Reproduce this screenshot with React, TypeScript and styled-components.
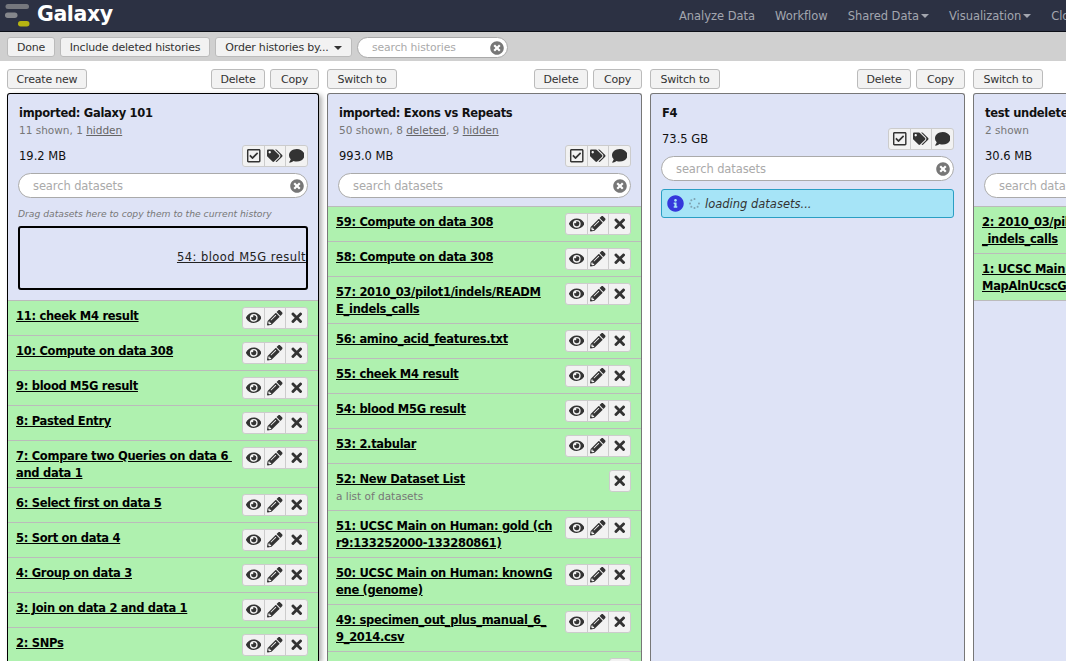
import styled, { createGlobalStyle } from "styled-components";
import { FaEye, FaPencilAlt, FaTimes, FaTimesCircle, FaTags, FaComment, FaRegCheckSquare, FaInfoCircle, FaSpinner } from "react-icons/fa";

type Dataset = { title: string; subtitle?: string; collection?: boolean };

const GALAXY_101: Dataset[] = [
    { title: "11: cheek M4 result" },
    { title: "10: Compute on data 308" },
    { title: "9: blood M5G result" },
    { title: "8: Pasted Entry" },
    { title: "7: Compare two Queries on data 6 \nand data 1" },
    { title: "6: Select first on data 5" },
    { title: "5: Sort on data 4" },
    { title: "4: Group on data 3" },
    { title: "3: Join on data 2 and data 1" },
    { title: "2: SNPs" },
];

const EXONS: Dataset[] = [
    { title: "59: Compute on data 308" },
    { title: "58: Compute on data 308" },
    { title: "57: 2010_03/pilot1/indels/READM\nE_indels_calls" },
    { title: "56: amino_acid_features.txt" },
    { title: "55: cheek M4 result" },
    { title: "54: blood M5G result" },
    { title: "53: 2.tabular" },
    { title: "52: New Dataset List", subtitle: "a list of datasets", collection: true },
    { title: "51: UCSC Main on Human: gold (ch\nr9:133252000-133280861)" },
    { title: "50: UCSC Main on Human: knownG\nene (genome)" },
    { title: "49: specimen_out_plus_manual_6_\n9_2014.csv" },
    { title: "48: New Dataset List", collection: true },
];

const UNDELETED: Dataset[] = [
    { title: "2: 2010_03/pilot1/indels/README\n_indels_calls" },
    { title: "1: UCSC Main on Human: wgEncode\nMapAlnUcscGenes" },
];

const GlobalStyle = createGlobalStyle`
    html, body {
        margin: 0;
        padding: 0;
        background: #fff;
    }
    body {
        font-family: "DejaVu Sans", "Liberation Sans", sans-serif;
        font-size: 11px;
        color: #111;
    }
`;

const Page = styled.div`
    width: 1066px;
    height: 661px;
    overflow: hidden;
    display: flex;
    flex-direction: column;
`;

const Masthead = styled.header`
    height: 31px;
    flex: none;
    display: flex;
    align-items: center;
    background: #2c3143;
    border-bottom: 1px solid #0c0f18;
    padding-left: 5px;
    white-space: nowrap;
    overflow: hidden;

    svg {
        flex: none;
    }
`;

const Brand = styled.span`
    font-size: 20.5px;
    font-weight: bold;
    letter-spacing: -0.4px;
    color: #fff;
    margin-left: 7px;
    width: 642px;
    flex: none;
    margin-top: -4px;
`;

const Nav = styled.nav`
    display: flex;
    flex: none;
    gap: 20px;
`;

const NavItem = styled.a<{ $menu?: boolean }>`
    color: #a3a6af;
    font-size: 11.5px;
    letter-spacing: -0.03px;
    display: flex;
    align-items: center;

    ${(p) => p.$menu && `
        &::after {
            content: "";
            margin-left: 2px;
            border-left: 4px solid transparent;
            border-right: 4px solid transparent;
            border-top: 4px solid #a3a6af;
        }
    `}
`;

const Toolbar = styled.div`
    height: 29px;
    flex: none;
    display: flex;
    align-items: flex-start;
    gap: 5px;
    padding: 5px 7px 0;
    background: #d0d0d0;
    box-sizing: border-box;
`;

const Button = styled.button<{ $w: number }>`
    width: ${(p) => p.$w}px;
    height: 20px;
    padding: 0;
    background: #f2f2f2;
    border: 1px solid #bbb;
    border-radius: 3px;
    font-family: inherit;
    font-size: 11px;
    letter-spacing: -0.2px;
    color: #333;
    white-space: nowrap;
    flex: none;
`;

const Caret = styled.span`
    display: inline-block;
    margin-left: 5px;
    vertical-align: middle;
    border-left: 4px solid transparent;
    border-right: 4px solid transparent;
    border-top: 4px solid #333;
`;

const Search = styled.div<{ $w?: number; $h: number; $small?: boolean }>`
    position: relative;
    width: ${(p) => (p.$w ? `${p.$w}px` : "auto")};
    height: ${(p) => p.$h}px;
    box-sizing: border-box;
    background: #fff;
    border: 1px solid #aaa;
    border-radius: 13px;
    flex: none;

    input {
        width: 100%;
        height: 100%;
        box-sizing: border-box;
        border: 0;
        outline: 0;
        padding: 0 30px 0 14px;
        background: transparent;
        border-radius: 13px;
        font-family: inherit;
        font-size: ${(p) => (p.$small ? 10.8 : 11.5)}px;
        letter-spacing: -0.1px;
    }
    input::placeholder {
        color: #aaa;
        opacity: 1;
    }
    svg {
        position: absolute;
        right: 3px;
        top: 50%;
        transform: translateY(-50%);
        width: 14px;
        height: 14px;
        color: #777;
    }
`;

const Columns = styled.main`
    flex: 1;
    min-height: 0;
    display: flex;
    gap: 8px;
    padding: 8px 0 0 7px;
    overflow: hidden;
`;

const Column = styled.section<{ $w: number }>`
    width: ${(p) => p.$w}px;
    flex: none;
    display: flex;
    flex-direction: column;
`;

const Controls = styled.div`
    display: flex;
    gap: 5px;
    margin-bottom: 4px;
`;

const Spacer = styled.span`
    flex: 1;
`;

const Panel = styled.div<{ $current?: boolean }>`
    flex: 1;
    background: #dee3f6;
    border: 1px solid ${(p) => (p.$current ? "#000" : "#777")};
    border-bottom: 0;
    border-radius: 3px 3px 0 0;
    box-shadow: ${(p) => (p.$current ? "3px 2px 5px rgba(0, 0, 0, 0.3)" : "none")};
    overflow: hidden;
`;

const PanelHeader = styled.div<{ $current?: boolean }>`
    padding: 10px 10px ${(p) => (p.$current ? 10 : 8)}px;
`;

const HistoryName = styled.div`
    height: 18px;
    line-height: 18px;
    font-size: 11.5px;
    letter-spacing: -0.3px;
    font-weight: bold;
    padding-left: 1px;
    white-space: nowrap;
`;

const Counts = styled.div`
    height: 17px;
    line-height: 16px;
    font-size: 10.5px;
    color: #777;
    padding-left: 1px;

    u {
        color: #666;
    }
`;

const SizeRow = styled.div`
    display: flex;
    justify-content: space-between;
    align-items: center;
    height: 22px;
    line-height: 23px;
    margin: 6px 0;
    padding-left: 1px;
    font-size: 11.5px;
`;

const ActionGroup = styled.div<{ $w: number }>`
    width: ${(p) => p.$w}px;
    height: 22px;
    flex: none;
    display: flex;
    box-sizing: border-box;
    background: #f2f2f2;
    border: 1px solid #ccc;
    border-radius: 3px;
    overflow: hidden;
`;

const Action = styled.span`
    flex: 1;
    display: flex;
    align-items: center;
    justify-content: center;
    color: #333;
    font-size: 15.5px;

    & + & {
        border-left: 1px solid #ccc;
    }
`;

const Hint = styled.div`
    height: 16px;
    line-height: 16px;
    margin-top: 8px;
    font-size: 9.2px;
    font-style: italic;
    color: #777;
    white-space: nowrap;
`;

const DropBox = styled.div`
    height: 64px;
    margin-top: 4px;
    box-sizing: border-box;
    border: 2px solid #000;
    border-radius: 3px;
    display: flex;
    align-items: center;
    justify-content: flex-end;
    font-size: 11.5px;
    letter-spacing: 0.45px;
    color: #222;
    text-decoration: underline;
    white-space: nowrap;
    padding-bottom: 3px;
`;

const InfoMessage = styled.div`
    height: 29px;
    margin-top: 8px;
    box-sizing: border-box;
    display: flex;
    align-items: center;
    gap: 5px;
    padding-left: 5px;
    background: #a6e4f7;
    border: 1px solid #2a9ec4;
    border-radius: 3px;
    font-size: 11.5px;
    font-style: italic;
    color: #333;

    svg:first-child {
        color: #3538dc;
        width: 17px;
        height: 17px;
    }
    svg:nth-child(2) {
        color: #7fa6b5;
        width: 11px;
        height: 11px;
    }
`;

const DatasetList = styled.ul`
    list-style: none;
    margin: 0;
    padding: 0;
    border-top: 1px solid #bbb;
`;

const Row = styled.li`
    display: flex;
    align-items: flex-start;
    gap: 8px;
    min-height: 35px;
    box-sizing: border-box;
    padding: 7px 10px 5px 8px;
    background: #aff1af;
    border-bottom: 1px solid #bbb;
`;

const RowText = styled.div`
    flex: 1;
    min-width: 0;
    white-space: nowrap;
`;

const RowTitle = styled.a`
    display: block;
    font-size: 11.5px;
    letter-spacing: -0.3px;
    font-weight: bold;
    line-height: 17px;
    color: #000;
    text-decoration: underline;
    white-space: pre;
`;

const RowSubtitle = styled.div`
    font-size: 10.5px;
    line-height: 17px;
    color: #777;
`;

const RowActions = styled.div`
    margin-top: -1px;
    flex: none;
`;

const Logo = () => (
    <svg width="25" height="24" viewBox="0 0 25 24">
        <rect x="0.5" y="0" width="23.5" height="5" rx="2.5" fill="#75777d" />
        <rect x="0" y="8.5" width="12.5" height="5.5" rx="2.7" fill="#85878c" />
        <rect x="13" y="17" width="11.5" height="5.5" rx="2.7" fill="#b6b411" />
    </svg>
);

const DatasetRow = ({ item }: { item: Dataset }) => (
    <Row>
        <RowText>
            <RowTitle>{item.title}</RowTitle>
            {item.subtitle && <RowSubtitle>{item.subtitle}</RowSubtitle>}
        </RowText>
        <RowActions>
            {item.collection ? (
                <ActionGroup $w={22}>
                    <Action><FaTimes /></Action>
                </ActionGroup>
            ) : (
                <ActionGroup $w={66}>
                    <Action><FaEye /></Action>
                    <Action><FaPencilAlt /></Action>
                    <Action><FaTimes /></Action>
                </ActionGroup>
            )}
        </RowActions>
    </Row>
);

const HistoryActions = () => (
    <ActionGroup $w={66}>
        <Action><FaRegCheckSquare /></Action>
        <Action><FaTags /></Action>
        <Action><FaComment /></Action>
    </ActionGroup>
);

const DatasetSearch = () => (
    <Search $h={25}>
        <input placeholder="search datasets" />
        <FaTimesCircle />
    </Search>
);

function App() {
    return (
        <Page>
            <GlobalStyle />
            <Masthead>
                <Logo />
                <Brand>Galaxy</Brand>
                <Nav>
                    <NavItem>Analyze Data</NavItem>
                    <NavItem>Workflow</NavItem>
                    <NavItem $menu>Shared Data</NavItem>
                    <NavItem $menu>Visualization</NavItem>
                    <NavItem>Cloud</NavItem>
                </Nav>
            </Masthead>
            <Toolbar>
                <Button $w={48}>Done</Button>
                <Button $w={150}>Include deleted histories</Button>
                <Button $w={137}>Order histories by...<Caret /></Button>
                <Search $w={151} $h={21} $small>
                    <input placeholder="search histories" />
                    <FaTimesCircle />
                </Search>
            </Toolbar>
            <Columns>
                <Column $w={312}>
                    <Controls>
                        <Button $w={80}>Create new</Button>
                        <Spacer />
                        <Button $w={54}>Delete</Button>
                        <Button $w={49}>Copy</Button>
                    </Controls>
                    <Panel $current>
                        <PanelHeader $current>
                            <HistoryName>imported: Galaxy 101</HistoryName>
                            <Counts>11 shown, 1 <u>hidden</u></Counts>
                            <SizeRow>19.2 MB<HistoryActions /></SizeRow>
                            <DatasetSearch />
                            <Hint>Drag datasets here to copy them to the current history</Hint>
                            <DropBox>54: blood M5G result</DropBox>
                        </PanelHeader>
                        <DatasetList>
                            {GALAXY_101.map((item) => <DatasetRow key={item.title} item={item} />)}
                        </DatasetList>
                    </Panel>
                </Column>
                <Column $w={315}>
                    <Controls>
                        <Button $w={70}>Switch to</Button>
                        <Spacer />
                        <Button $w={54}>Delete</Button>
                        <Button $w={49}>Copy</Button>
                    </Controls>
                    <Panel>
                        <PanelHeader>
                            <HistoryName>imported: Exons vs Repeats</HistoryName>
                            <Counts>50 shown, 8 <u>deleted</u>, 9 <u>hidden</u></Counts>
                            <SizeRow>993.0 MB<HistoryActions /></SizeRow>
                            <DatasetSearch />
                        </PanelHeader>
                        <DatasetList>
                            {EXONS.map((item) => <DatasetRow key={item.title} item={item} />)}
                        </DatasetList>
                    </Panel>
                </Column>
                <Column $w={315}>
                    <Controls>
                        <Button $w={70}>Switch to</Button>
                        <Spacer />
                        <Button $w={54}>Delete</Button>
                        <Button $w={49}>Copy</Button>
                    </Controls>
                    <Panel>
                        <PanelHeader>
                            <HistoryName>F4</HistoryName>
                            <SizeRow>73.5 GB<HistoryActions /></SizeRow>
                            <DatasetSearch />
                            <InfoMessage>
                                <FaInfoCircle />
                                <FaSpinner />
                                loading datasets...
                            </InfoMessage>
                        </PanelHeader>
                    </Panel>
                </Column>
                <Column $w={315}>
                    <Controls>
                        <Button $w={70}>Switch to</Button>
                        <Spacer />
                        <Button $w={54}>Delete</Button>
                        <Button $w={49}>Copy</Button>
                    </Controls>
                    <Panel>
                        <PanelHeader>
                            <HistoryName>test undeleted history</HistoryName>
                            <Counts>2 shown</Counts>
                            <SizeRow>30.6 MB<HistoryActions /></SizeRow>
                            <DatasetSearch />
                        </PanelHeader>
                        <DatasetList>
                            {UNDELETED.map((item) => <DatasetRow key={item.title} item={item} />)}
                        </DatasetList>
                    </Panel>
                </Column>
            </Columns>
        </Page>
    );
}

export default App;
